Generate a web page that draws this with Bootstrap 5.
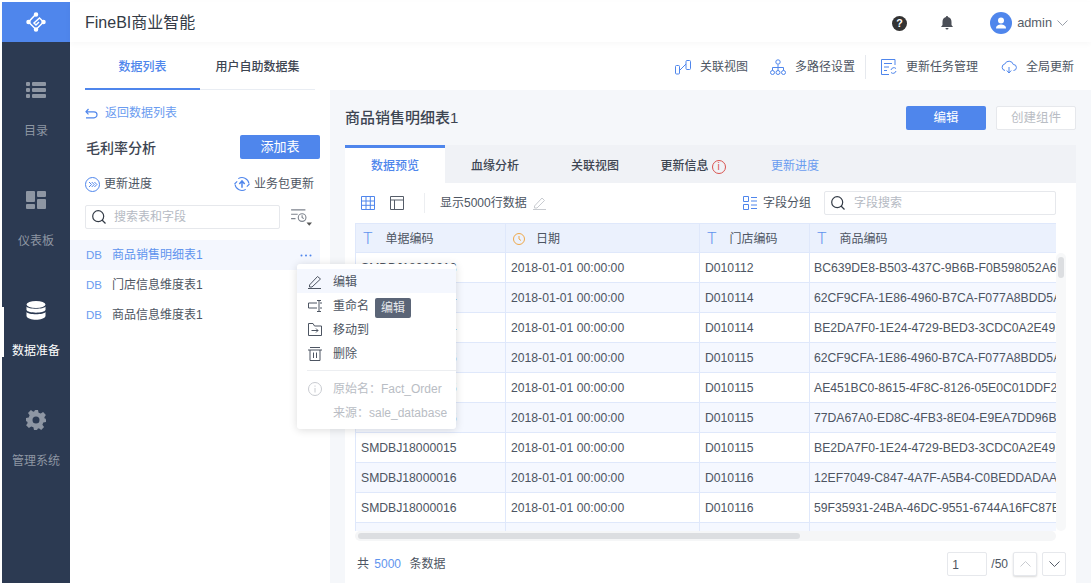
<!DOCTYPE html>
<html lang="zh"><head><meta charset="utf-8"><title>FineBI</title>
<link href="https://cdn.jsdelivr.net/npm/bootstrap@5.3.0/dist/css/bootstrap.min.css" rel="stylesheet">
<style>
html,body{height:583px;overflow:hidden;background:#fff}
body{font-family:"Liberation Sans","Noto Sans CJK SC",sans-serif;font-size:12px;color:#4d5562;padding:2px 0 0 2px}
svg{display:block;flex:none}
.app-shell{height:581px}
.side-rail{width:68px;background:#2c3a52;flex:none}
.side-logo{height:40px;background:#4f86ec}
.side-item{height:110px;color:#8e96a3;position:relative;padding-top:38px;line-height:17px}
.side-item.on{color:#fff}
.side-item.on:before{content:"";position:absolute;left:0;top:45px;width:2px;height:50px;background:#fff}
.icon-slot{height:20px;margin-bottom:23px}
.app-body{min-width:0}
.top-bar{height:40px;padding:2px 23px 0 15px;box-shadow:0 2px 6px rgba(0,0,0,.03);position:relative}
.brand-name{font-size:16px;color:#333b46}
.user-name{font-size:12.800px;color:#555c68;margin:0 5px 0 5px}
.avatar-dot{width:22px;height:22px;border-radius:50%;background:#4f86ec}
.bell-gap{margin:0 37px 0 34px}
.sub-bar{height:48px}
.left-tabs{width:260px;padding:0 15px;flex:none}
.left-tab{height:48px;line-height:51px;font-weight:500;text-align:center;border-bottom:1px solid #e9edf3;flex:0 0 115px;color:#3d4552}
.left-tab.on{color:#4f86ec;border-bottom:2px solid #4f86ec}
.sub-tools{padding:2px 17px 0 0;color:#4d5562}
.tool-link{gap:9px;line-height:16px}
.tool-gap-a{margin-right:22px}
.tool-gap-b{margin-right:10px}
.tool-gap-c{margin:0 23px 0 15px}
.tool-sep{width:1px;height:24px;background:#e6e9ee}
.main-row{height:493px}
.left-panel{width:260px;flex:none;position:relative}
.back-link{color:#6a9cf0;padding:15px 0 0 15px;line-height:16px;gap:7px}
.pkg-head{padding:14px 10px 0 16px}
.pkg-title{font-size:14px;font-weight:500;color:#3d4552;padding-top:2px}
.add-btn{width:80px;height:24px;padding:0;font-size:13px;background:#4f86ec;border:0;border-radius:2px;color:#fff}
.pkg-actions{padding:16px 16px 0 15px;line-height:18px}
.search-row{padding:12px 8px 0 15px;gap:10px}
.search-box{width:195px;height:24px;border:1px solid #e6e8ec;border-radius:2px;padding:0 7px 0 6px;gap:8px;color:#b5bac3;background:#fff;flex:none}
.tree-list{margin-top:11px}
.tree-row{height:30px;padding-left:16px;line-height:30px;margin-right:10px}
.tree-row.on{background:#f4f7fe;color:#5f94ee}
.db-tag{color:#6a9cf0;font-size:11.500px;width:26px;flex:none}
.more-dots{margin-left:auto;margin-right:8px}
.pop-menu{position:absolute;left:227px;top:174px;width:159px;height:165px;background:#fff;border-radius:3px;box-shadow:0 1px 8px rgba(0,0,0,.14);padding-top:5px;z-index:5}
.pop-item{height:24px;padding:1px 0 0 11px;gap:11px;color:#4d5562}
.pop-item.on{background:#f4f7fe}
.pop-rule{border-top:1px solid #eceef1;margin:5px 0 5px 10px}
.pop-note{height:24px;padding:2px 0 0 11px;gap:11px;color:#b9bdc4}
.pop-note.bare{padding-left:36px}
.tip-dark{position:absolute;left:78px;top:34px;width:36px;height:20px;line-height:21px;text-align:center;background:#5b6577;color:#e7e9ed;border-radius:2px}
.right-panel{background:#f5f7fa;padding:0 15px;flex:1 1 auto;min-width:0}
.title-row{height:55px}
.page-title{font-size:15px;font-weight:500;color:#3d4552;padding-top:2px}
.edit-btn{width:80px;height:24px;padding:2px 0 0;font-size:12.500px;background:#4f86ec;border:0;border-radius:2px;color:#fff}
.make-btn{width:80px;height:24px;padding:2px 0 0;font-size:12.500px;background:#fff;border:1px solid #e6e8ec;border-radius:2px;color:#b9bdc4;margin-left:10px}
.page-tabs{height:38px;background:#f0f2f6}
.page-tab{width:100px;text-align:center;line-height:43px;color:#3d4552;font-weight:500}
.page-tab.on{background:#fff;color:#4f86ec;border-top:3px solid #4f86ec;line-height:37px}
.page-tab.link{color:#6a9cf0;font-weight:400}
.page-tab.with-info{padding-right:4px}
.info-red{width:14px;height:14px;border:1px solid #d9534f;color:#d9534f;border-radius:50%;font-size:10px;line-height:12px;text-align:center;display:inline-block;margin-left:3px}
.card-body-wrap{background:#fff;height:400px;padding:0 10px;position:relative}
.grid-tools{height:40px;width:701px}
.view-a{margin-left:6px}
.view-b{margin-left:15px}
.tool-sep-b{width:1px;height:20px;background:#eceef1;margin:0 15px 0 20px}
.pencil-soft{margin-left:6px}
.group-icon{margin:0 6px 0 auto}
.field-search{width:232px;height:24px;border:1px solid #e6e8ec;border-radius:2px;gap:9px;padding:0 6px;margin-left:13px;color:#b5bac3}
.grid-wrap{height:308px;overflow:hidden;width:701px;position:relative}
.data-grid{table-layout:fixed;width:701px;border-collapse:collapse}
.data-grid th,.data-grid td{border:1px solid #dfe8fb;height:30px;padding:0 5px;white-space:nowrap;overflow:hidden;font-weight:400;color:#4d5562;line-height:14px;font-size:12.200px}
.data-grid td:last-child{padding-left:4px}
.data-grid th{background:#ebf1fd;padding:2px 5px 0 7px;height:29px;font-size:12px}
.data-grid tr:nth-child(even) td{background:#f5f8ff}
.head-in{gap:13px}
.clock-mark{margin-right:-2px}
.t-mark{color:#5f94ee;font-size:16px;line-height:14px;font-family:Roboto,sans-serif;font-weight:300}
.h-track{height:10px;width:701px;background:#f5f6f7;border-radius:5px;padding:2px 3px}
.h-thumb{height:6px;width:442px;background:#dcdee1;border-radius:3px}
.v-track{position:absolute;left:711px;top:70px;width:10px;height:278px;background:#f7f8f9;border-radius:5px;padding:4px 2px}
.v-thumb{height:21px;background:#dcdee1;border-radius:3px}
.pager-row{height:42px;padding:4px 0 0 2px;color:#4d5562}
.num-blue{color:#5f94ee;margin:0 5px 0 2px}
.page-input{width:40px;height:24px;border:1px solid #e6e8ec;border-radius:2px;padding-left:4px;line-height:24px;margin-right:4px}
.page-arrow{width:24px;height:24px;border:1px solid #e6e8ec;border-radius:2px;margin-left:5px;background:#fff}
.page-arrow.off{box-shadow:0 1px 2px rgba(0,0,0,.15)}
</style></head><body>
<div class="app-shell d-flex">
<nav class="side-rail d-flex flex-column text-center">
<div class="side-logo d-flex align-items-center justify-content-center">
<svg width="20" height="20" viewBox="0 0 20 20" fill="none" stroke="#fff" stroke-width="1.500"><path d="M10 2 2.500 10 10 17.500l7.500-7.500-4-4L8 11l2 2 3-3"/><circle cx="10" cy="2.500" r="1.500" fill="#fff"/><circle cx="2.500" cy="10" r="1.500" fill="#fff"/><circle cx="10" cy="17.500" r="1.500" fill="#fff"/><circle cx="17.500" cy="10" r="1.500" fill="#fff"/></svg></div>
<div class="side-item d-flex flex-column align-items-center"><span class="icon-slot d-flex align-items-center">
<svg width="20" height="16" viewBox="0 0 20 16" fill="#8e96a3"><rect width="4" height="4" rx="1"/><rect x="6" width="14" height="4" rx="1"/><rect y="6" width="4" height="4" rx="1"/><rect x="6" y="6" width="14" height="4" rx="1"/><rect y="12" width="4" height="4" rx="1"/><rect x="6" y="12" width="14" height="4" rx="1"/></svg></span><span>目录</span></div>
<div class="side-item d-flex flex-column align-items-center"><span class="icon-slot d-flex align-items-center">
<svg width="20" height="18" viewBox="0 0 20 18" fill="#8e96a3"><rect width="9" height="11" rx="1"/><rect x="11" width="9" height="6" rx="1"/><rect y="13" width="9" height="5" rx="1"/><rect x="11" y="8" width="9" height="10" rx="1"/></svg></span><span>仪表板</span></div>
<div class="side-item on d-flex flex-column align-items-center"><span class="icon-slot d-flex align-items-center">
<svg width="20" height="19" viewBox="0 0 20 19" fill="#fff"><ellipse cx="10" cy="3.500" rx="9.500" ry="3.500"/><path d="M.5 5.500C2 8.500 18 8.500 19.500 5.500V9C18 12.500 2 12.500 .5 9zM.5 11C2 14 18 14 19.500 11v4c-1.500 5-17.500 5-19 0z"/></svg></span><span>数据准备</span></div>
<div class="side-item d-flex flex-column align-items-center"><span class="icon-slot d-flex align-items-center">
<svg width="20" height="20" viewBox="0 0 20 20" fill="#8e96a3"><path fill-rule="evenodd" d="M8 0h4l.6 2.700 2.200.9L17.100 2 19.900 4.900 18.300 7.200l.9 2.200L20 8v4l-2.700.6-.9 2.200 1.700 2.300-2.900 2.800-2.300-1.600-2.200.9L12 20H8l-.6-2.700-2.200-.9-2.300 1.700L.1 15.200l1.600-2.300-.9-2.200L0 12V8l2.700-.6.900-2.200L2 2.900 4.900.1l2.300 1.600 2.200-.9zM10 6.500a3.500 3.500 0 1 0 0 7 3.500 3.500 0 0 0 0-7z"/></svg></span><span>管理系统</span></div>
</nav>
<div class="app-body flex-grow-1 d-flex flex-column">
<header class="top-bar d-flex align-items-center">
<span class="brand-name">FineBI商业智能</span>
<svg class="ms-auto" width="15" height="15" viewBox="0 0 14 14"><circle cx="7" cy="7" r="7" fill="#333"/><text x="7" y="10.500" text-anchor="middle" fill="#fff" font-size="10" font-weight="700" font-family="Liberation Sans">?</text></svg>
<svg class="bell-gap" width="12" height="14" viewBox="0 0 12 14" fill="#4b4f57"><path d="M6 0c.6 0 1 .4 1 1 2.500.5 3.500 2.500 3.500 5v3L12 11H0l1.500-2V6C1.500 3.500 2.500 1.500 5 1c0-.6.4-1 1-1zM4.500 12h3a1.500 1.500 0 0 1-3 0z"/></svg>
<span class="avatar-dot d-flex align-items-center justify-content-center"><svg width="12" height="12" viewBox="0 0 12 12" fill="#fff"><circle cx="6" cy="3.500" r="3"/><path d="M1 11.500c0-3 2.500-4 5-4s5 1 5 4z"/></svg></span>
<span class="user-name">admin</span>
<svg width="11" height="6" viewBox="0 0 11 6" fill="none" stroke="#9aa0aa"><path d="m.5.500 5 5 5-5"/></svg>
</header>
<div class="sub-bar d-flex">
<div class="left-tabs d-flex"><div class="left-tab on">数据列表</div><div class="left-tab">用户自助数据集</div></div>
<div class="sub-tools flex-grow-1 d-flex align-items-center justify-content-end">
<span class="tool-link tool-gap-a d-flex align-items-center"><svg width="16" height="15" viewBox="0 0 16 15" fill="none" stroke="#4f86ec"><rect x=".5" y="5.500" width="4" height="8.500" rx="1"/><rect x="11" y=".5" width="4.500" height="9" rx="1"/><path d="m5 10 6-6"/></svg>关联视图</span>
<span class="tool-link tool-gap-b d-flex align-items-center"><svg width="16" height="16" viewBox="0 0 16 16" fill="none" stroke="#4f86ec"><circle cx="8" cy="3" r="2.200"/><circle cx="2.500" cy="13.500" r="2"/><circle cx="8" cy="13.500" r="2"/><circle cx="13.500" cy="13.500" r="2"/><path d="M8 5.500v6M2.500 11.500V8.500h11v3"/></svg>多路径设置</span>
<span class="tool-sep"></span>
<span class="tool-link tool-gap-c d-flex align-items-center"><svg width="16" height="16" viewBox="0 0 16 16" fill="none" stroke="#4f86ec"><path d="M14 6V.5H.5v15H8M3 4.500h8M3 8h5M3 11.500h3"/><path d="M10 11a3 3 0 0 1 5-1.500M15 12a3 3 0 0 1-5 1.500"/></svg>更新任务管理</span>
<span class="tool-link d-flex align-items-center"><svg width="16" height="14" viewBox="0 0 16 14" fill="none" stroke="#4f86ec"><path d="M4 10.500A3.300 3.300 0 0 1 3.800 4 4.500 4.500 0 0 1 12.300 4.500 3 3 0 0 1 12.500 10.500M8 7v6M5.800 10.500 8 13l2.200-2.500"/></svg>全局更新</span>
</div></div>
<div class="main-row d-flex">
<aside class="left-panel">
<div class="back-link d-flex align-items-center"><svg width="13" height="11" viewBox="0 0 13 11" fill="none" stroke="#4f86ec" stroke-width="1.200"><path d="M1 9.800h8a3 3 0 0 0 0-6H1M3.500 1 1 3.800l2.500 2.500"/></svg>返回数据列表</div>
<div class="pkg-head d-flex justify-content-between align-items-center"><span class="pkg-title">毛利率分析</span><button class="btn add-btn">添加表</button></div>
<div class="pkg-actions d-flex justify-content-between">
<span class="d-flex align-items-center gap-1"><svg width="15" height="15" viewBox="0 0 15 15" fill="none" stroke="#4f86ec"><circle cx="7.500" cy="7.500" r="7"/><path d="m4 5 2.500 2.500L4 10M6.700 5l2.500 2.500L6.700 10M9.400 5l2.500 2.500L9.400 10"/></svg>更新进度</span>
<span class="d-flex align-items-center gap-1"><svg width="16" height="16" viewBox="0 0 15 15" fill="none" stroke="#4f86ec"><path d="M4 2.500A6.500 6.500 0 0 1 14 7M11 12.500A6.500 6.500 0 0 1 1 8M.5 7.500 3 5M14.500 7.500 12 10"/><path d="M7.500 11V5M5 7.500l2.500-3 2.500 3" stroke-width="1.400"/></svg>业务包更新</span></div>
<div class="search-row d-flex align-items-center">
<div class="search-box d-flex align-items-center"><svg width="14" height="14" viewBox="0 0 14 14" fill="none" stroke="#333b46" stroke-width="1.200"><circle cx="6.200" cy="6.200" r="5.500"/><path d="m10 10 3.500 3.500"/></svg>搜索表和字段</div>
<svg width="22" height="20" viewBox="0 0 20 18" fill="none" stroke="#7d838d"><path d="M1 2.500h13M1 6.500h6M1 10.500h4"/><circle cx="11" cy="9.500" r="3.500"/><path d="M11 7.500v2l1.500 1"/><path d="M15 14h5l-2.500 3z" fill="#555" stroke="none"/></svg></div>
<div class="tree-list">
<div class="tree-row on d-flex align-items-center"><span class="db-tag">DB</span>商品销售明细表1<svg class="more-dots" width="12" height="3" viewBox="0 0 12 3" fill="#4f86ec"><circle cx="1.500" cy="1.500" r="1"/><circle cx="6" cy="1.500" r="1"/><circle cx="10.500" cy="1.500" r="1"/></svg></div>
<div class="tree-row d-flex align-items-center"><span class="db-tag">DB</span>门店信息维度表1</div>
<div class="tree-row d-flex align-items-center"><span class="db-tag">DB</span>商品信息维度表1</div></div>
<div class="pop-menu">
<div class="pop-item on d-flex align-items-center"><svg width="14" height="14" viewBox="0 0 14 14" fill="none" stroke="#4d5562"><path d="M1.500 10 9.500 1.500 12.500 4 4 12H1.500zM0 13.500h13"/></svg>编辑</div>
<div class="pop-item d-flex align-items-center"><svg width="14" height="12" viewBox="0 0 14 12" fill="none" stroke="#4d5562"><path d="M9 3H.5v5H9M11 .5v11M9 .5h4M9 11.500h4M12 3h2M12 8h2"/></svg>重命名</div>
<div class="pop-item d-flex align-items-center"><svg width="14" height="13" viewBox="0 0 14 13" fill="none" stroke="#4d5562"><path d="M.5 12.500V.5h4.500L6.500 3h7v9.500zM3.500 7.500H10M8 5.500l2 2-2 2"/></svg>移动到</div>
<div class="pop-item d-flex align-items-center"><svg width="14" height="14" viewBox="0 0 14 14" fill="none" stroke="#4d5562"><path d="M2 .5h10M0 3h14M2 3v10.500h10V3M5.500 5.500v5.500M8.500 5.500v5.500"/></svg>删除</div>
<div class="pop-rule"></div>
<div class="pop-note d-flex align-items-center"><svg width="14" height="14" viewBox="0 0 14 14" fill="none" stroke="#c8cbd0"><circle cx="7" cy="7" r="6.500"/><path d="M7 6v4.500M7 3.500v1.200"/></svg>原始名：Fact_Order</div>
<div class="pop-note bare d-flex align-items-center">来源：sale_database</div>
<div class="tip-dark">编辑</div>
</div>
</aside>
<main class="right-panel">
<div class="title-row d-flex justify-content-between align-items-center"><span class="page-title">商品销售明细表1</span><span class="d-flex"><button class="btn edit-btn">编辑</button><button class="btn make-btn">创建组件</button></span></div>
<div class="page-tabs d-flex"><div class="page-tab on">数据预览</div><div class="page-tab">血缘分析</div><div class="page-tab">关联视图</div><div class="page-tab with-info">更新信息<span class="info-red">i</span></div><div class="page-tab link">更新进度</div></div>
<div class="card-body-wrap">
<div class="grid-tools d-flex align-items-center">
<svg class="view-a" width="14" height="14" viewBox="0 0 14 14" fill="none" stroke="#4f86ec"><path d="M.5.500h13v13H.5zM.5 5h13M.5 9.300h13M5 .5v13M9.300 .5v13"/></svg>
<svg class="view-b" width="14" height="14" viewBox="0 0 14 14" fill="none" stroke="#555c68"><path d="M.5.500h13v13H.5zM.5 4h13M4.500 4v9.500"/></svg>
<span class="tool-sep-b"></span>
<span>显示5000行数据</span>
<svg class="pencil-soft" width="13" height="14" viewBox="0 0 13 14" fill="none" stroke="#c8cbd0"><path d="M1.500 10 9 2l2.500 2.500L4 12H1.500zM0 13.500h13"/></svg>
<svg class="group-icon" width="14" height="14" viewBox="0 0 14 14" fill="none" stroke="#4f86ec"><path d="M.5.500h5v5h-5zM.5 8.500h5v5h-5zM8 1.500h6M8 5h6M8 9h6M8 12.500h6"/></svg>
<span>字段分组</span>
<div class="field-search d-flex align-items-center"><svg width="14" height="14" viewBox="0 0 14 14" fill="none" stroke="#333b46" stroke-width="1.200"><circle cx="6.200" cy="6.200" r="5.500"/><path d="m10 10 3.500 3.500"/></svg>字段搜索</div>
</div>
<div class="grid-wrap">
<table class="data-grid"><colgroup><col width="150"><col width="194"><col width="110"><col width="247"></colgroup>
<thead><tr><th><span class="head-in d-flex align-items-center"><span class="t-mark">T</span>单据编码</span></th><th><span class="head-in d-flex align-items-center"><svg class="clock-mark" width="12" height="12" viewBox="0 0 12 12" fill="none" stroke="#eea84a"><circle cx="6" cy="6" r="5.500"/><path d="M6 3v3l2 1.500"/></svg>日期</span></th><th><span class="head-in d-flex align-items-center"><span class="t-mark">T</span>门店编码</span></th><th><span class="head-in d-flex align-items-center"><span class="t-mark">T</span>商品编码</span></th></tr></thead>
<tbody>
<tr><td>SMDBJ18000013</td><td>2018-01-01 00:00:00</td><td>D010112</td><td>BC639DE8-B503-437C-9B6B-F0B598052A6</td></tr>
<tr><td>SMDBJ18000014</td><td>2018-01-01 00:00:00</td><td>D010114</td><td>62CF9CFA-1E86-4960-B7CA-F077A8BDD5A</td></tr>
<tr><td>SMDBJ18000014</td><td>2018-01-01 00:00:00</td><td>D010114</td><td>BE2DA7F0-1E24-4729-BED3-3CDC0A2E491</td></tr>
<tr><td>SMDBJ18000015</td><td>2018-01-01 00:00:00</td><td>D010115</td><td>62CF9CFA-1E86-4960-B7CA-F077A8BDD5A</td></tr>
<tr><td>SMDBJ18000015</td><td>2018-01-01 00:00:00</td><td>D010115</td><td>AE451BC0-8615-4F8C-8126-05E0C01DDF2</td></tr>
<tr><td>SMDBJ18000015</td><td>2018-01-01 00:00:00</td><td>D010115</td><td>77DA67A0-ED8C-4FB3-8E04-E9EA7DD96BE</td></tr>
<tr><td>SMDBJ18000015</td><td>2018-01-01 00:00:00</td><td>D010115</td><td>BE2DA7F0-1E24-4729-BED3-3CDC0A2E491</td></tr>
<tr><td>SMDBJ18000016</td><td>2018-01-01 00:00:00</td><td>D010116</td><td>12EF7049-C847-4A7F-A5B4-C0BEDDADAA8</td></tr>
<tr><td>SMDBJ18000016</td><td>2018-01-01 00:00:00</td><td>D010116</td><td>59F35931-24BA-46DC-9551-6744A16FC87E</td></tr>
<tr><td></td><td></td><td></td><td></td></tr>
</tbody></table></div>
<div class="h-track"><div class="h-thumb"></div></div>
<div class="v-track"><div class="v-thumb"></div></div>
<div class="pager-row d-flex align-items-center"><span>共</span><span class="num-blue">&nbsp;5000&nbsp;</span><span>条数据</span>
<span class="page-input ms-auto">1</span><span>/50</span>
<span class="page-arrow off d-flex align-items-center justify-content-center"><svg width="11" height="6" viewBox="0 0 11 6" fill="none" stroke="#c8cbd0"><path d="m.5 5.500 5-5 5 5"/></svg></span>
<span class="page-arrow d-flex align-items-center justify-content-center"><svg width="11" height="6" viewBox="0 0 11 6" fill="none" stroke="#555c68"><path d="m.5.500 5 5 5-5"/></svg></span></div>
</div>
</main>
</div></div></div>
</body></html>
